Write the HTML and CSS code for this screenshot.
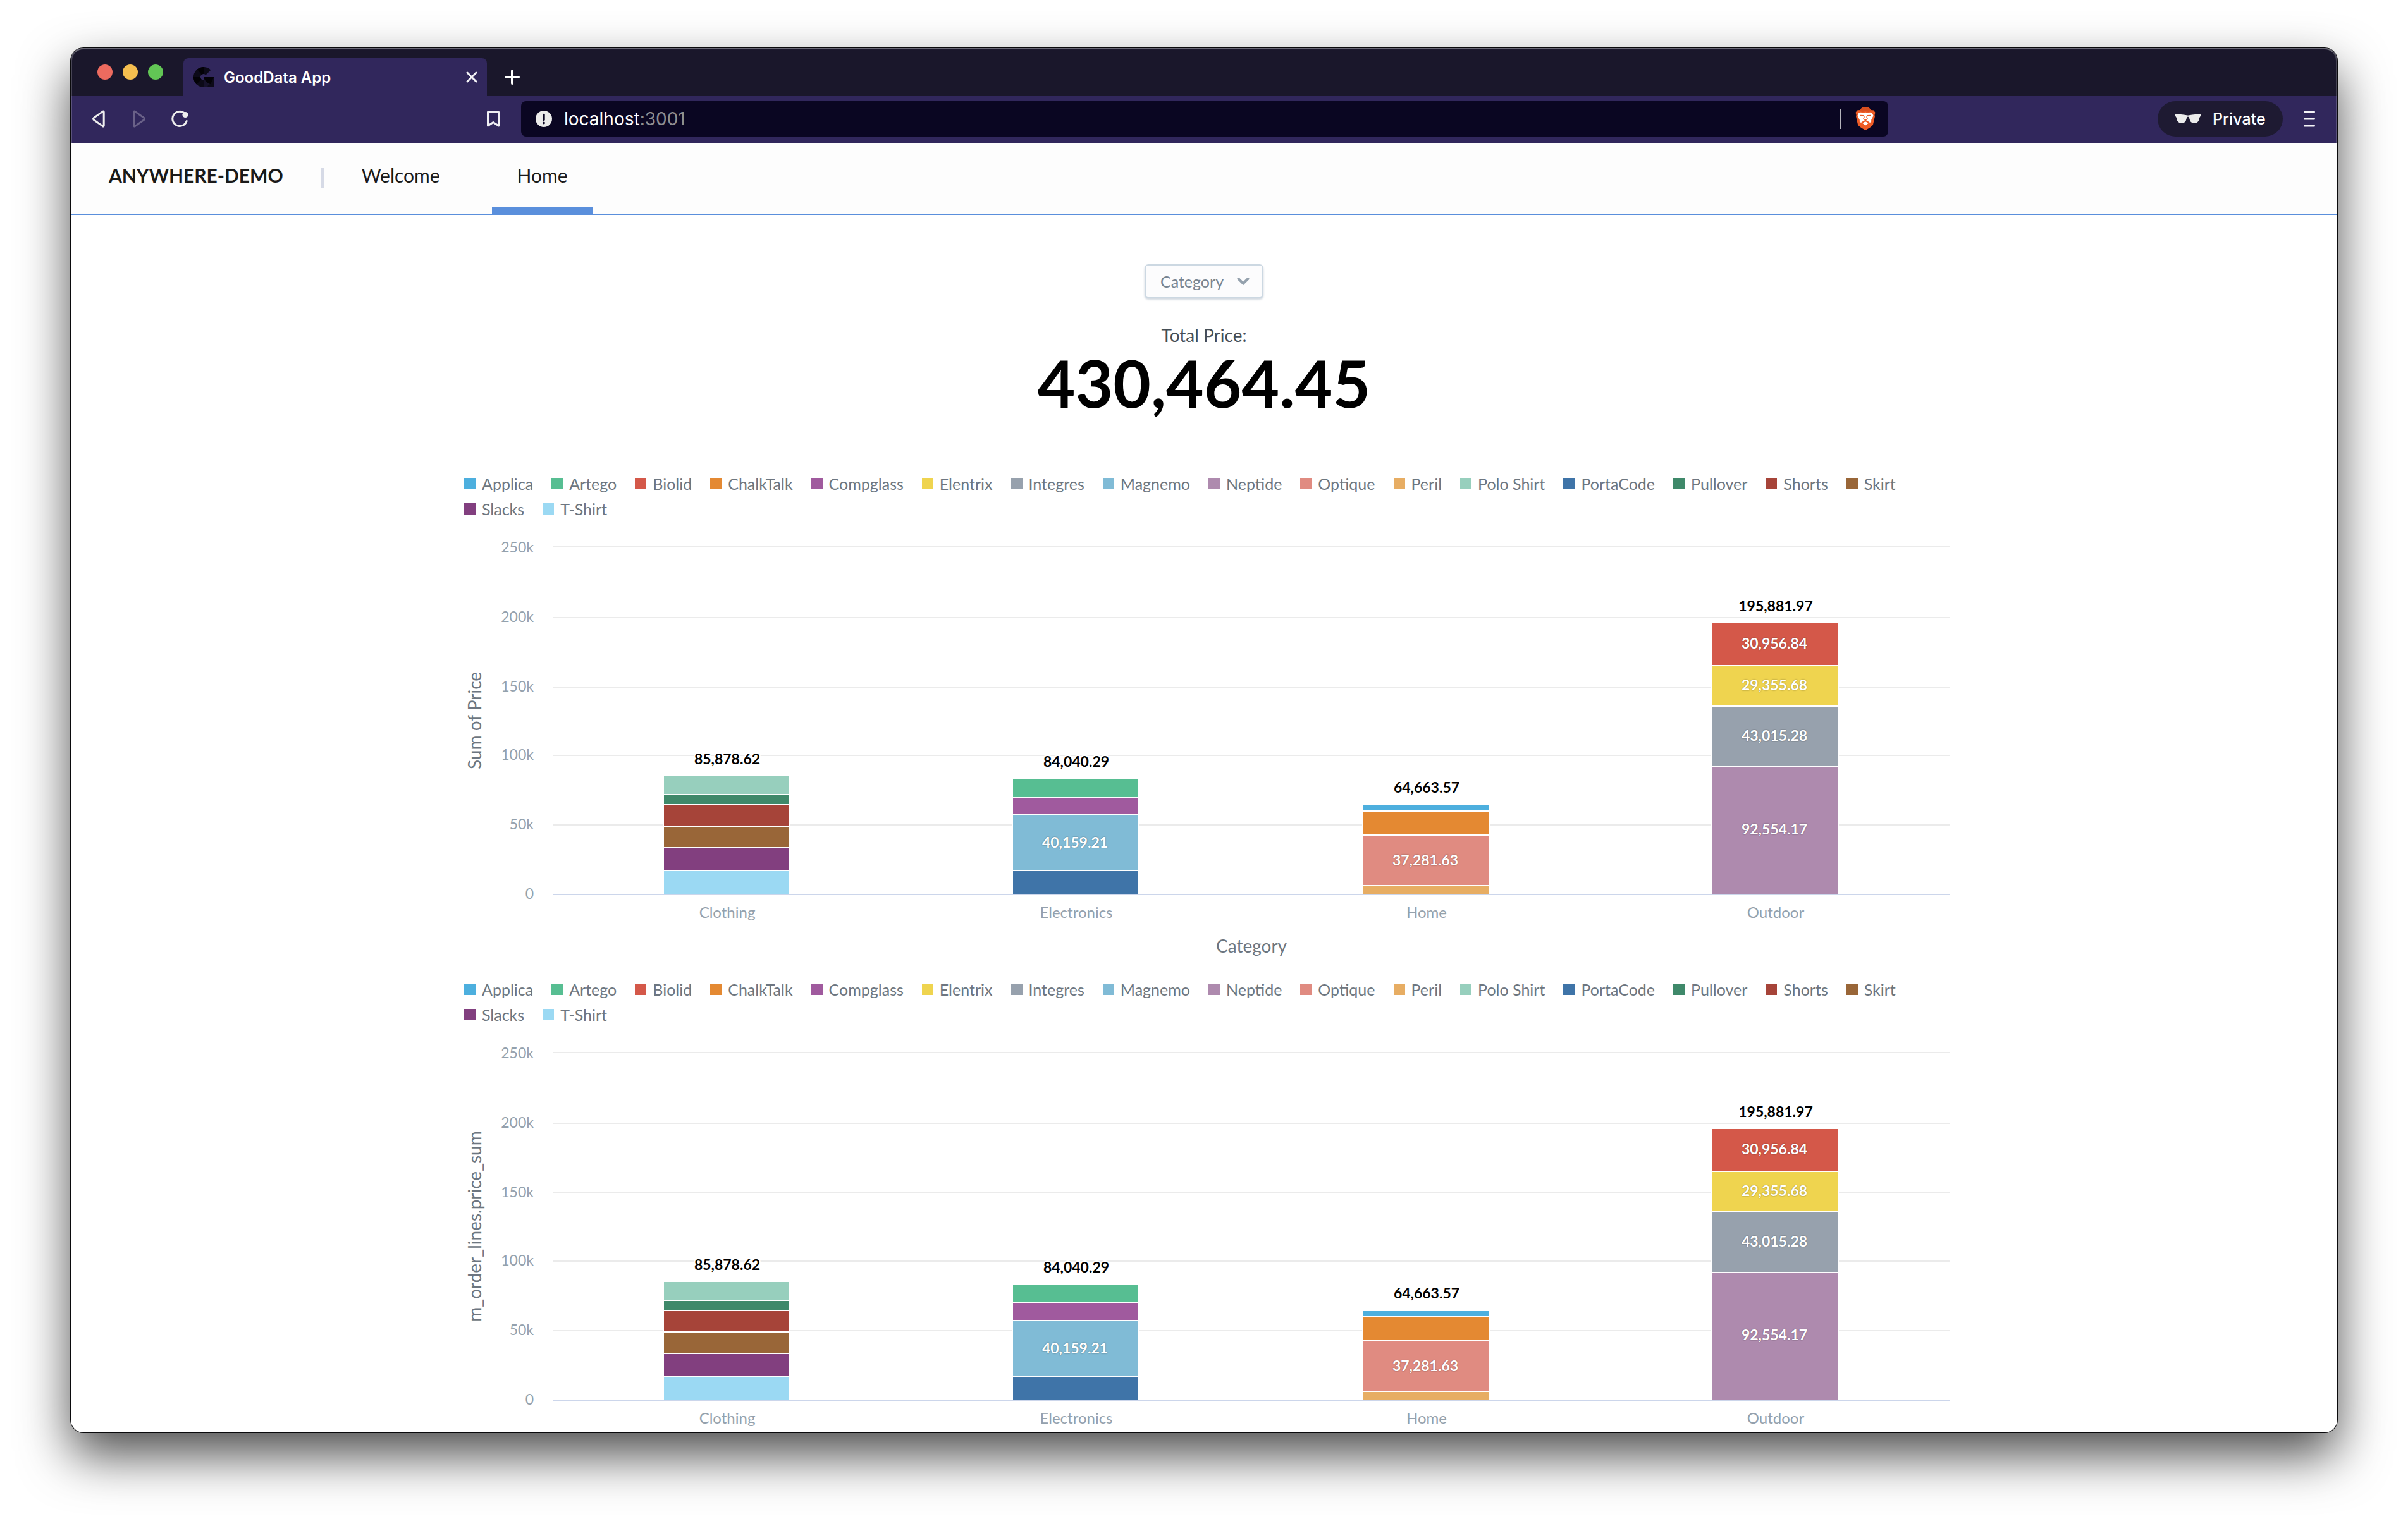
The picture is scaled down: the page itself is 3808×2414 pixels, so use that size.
FILE: index.html
```html
<!DOCTYPE html>
<html lang="en">
<head>
<meta charset="utf-8">
<title>GoodData App</title>
<link rel="stylesheet" href="styles.css">
</head>
<body>
<div class="window">
  <header class="chrome">
    <div class="tabstrip">
      <div class="lights">
        <button class="light light-close" aria-label="Close window"></button>
        <button class="light light-min" aria-label="Minimise window"></button>
        <button class="light light-max" aria-label="Zoom window"></button>
      </div>
      <div class="tab">
        <svg class="favicon" viewBox="0 0 32 32" width="32" height="32" aria-hidden="true">
          <path fill="#0c0a18" d="M27.3 4.7A16 16 0 1 0 22 30.8Q26 32 32 32V16H16V21A5 5 0 1 1 19.5 12.5Z"/>
          <path fill="#030207" d="M16 0A16 16 0 0 0 6 3.5L12.8 12A5 5 0 0 1 16 11ZM0 16A16 16 0 0 0 4.7 27.3L12.5 19.5A5 5 0 0 1 11 16ZM16 16H32L27 27Q19 25 16 16Z"/>
          <path fill="#16122b" d="M16 21V32L21 31L26 27Q20 25 17 19Z"/>
        </svg>
        <span class="tab-title">GoodData App</span>
        <button class="icon-button tab-close" aria-label="Close tab">
          <svg viewBox="0 0 18 18" width="18" height="18"><path d="M2 2L16 16M16 2L2 16" stroke="#f4f3f7" stroke-width="3" stroke-linecap="round"/></svg>
        </button>
      </div>
      <button class="icon-button new-tab" aria-label="New tab">
        <svg viewBox="0 0 24 24" width="24" height="24"><path d="M12 2V22M2 12H22" stroke="#fff" stroke-width="4" stroke-linecap="round"/></svg>
      </button>
    </div>
    <div class="toolbar">
      <div class="toolbar-left">
        <button class="icon-button" aria-label="Back">
          <svg viewBox="0 0 20 28" width="20" height="28" fill="none"><path d="M16.4 2.4Q18.2 1.4 18.2 3.4V24.6Q18.2 26.6 16.4 25.6L2.4 15.6Q.6 14 2.4 12.4Z" stroke="#eee" stroke-width="3"/></svg>
        </button>
        <button class="icon-button" aria-label="Forward" disabled>
          <svg viewBox="0 0 20 28" width="20" height="28" fill="none"><path d="M3.6 2.4Q1.8 1.4 1.8 3.4V24.6Q1.8 26.6 3.6 25.6L17.6 15.6Q19.4 14 17.6 12.4Z" stroke="#6a6188" stroke-width="3"/></svg>
        </button>
        <button class="icon-button" aria-label="Reload">
          <svg viewBox="0 0 28 28" width="28" height="28" fill="none"><path d="M21 4.5A11.5 11.5 0 1 0 25.2 17.5" stroke="#eee" stroke-width="3" stroke-linecap="round"/><circle cx="23" cy="7.5" r="4.6" fill="#eee"/></svg>
        </button>
        <button class="icon-button bookmark" aria-label="Bookmark">
          <svg viewBox="0 0 20 26" width="20" height="26" fill="none"><path d="M1.5 2.5Q1.5 1.5 2.5 1.5H17.5Q18.5 1.5 18.5 2.5V24L10 18.5L1.5 24Z" stroke="#f0eff4" stroke-width="3" stroke-linejoin="round"/></svg>
        </button>
      </div>
      <div class="address">
        <svg viewBox="0 0 26 26" width="26" height="26" aria-hidden="true"><circle cx="13" cy="13" r="13" fill="#ebebeb"/><path d="M13 6.5V14.5" stroke="#0a0622" stroke-width="3.4" stroke-linecap="round"/><circle cx="13" cy="19.5" r="1.9" fill="#0a0622"/></svg>
        <div class="url" role="textbox" aria-label="Address">localhost<span class="port">:3001</span></div>
        <span class="address-rule"></span>
        <button class="shield" aria-label="Brave Shields">
          <svg viewBox="0 0 32 36" width="32" height="36">
            <path fill="#ee5c26" d="M7 4L11 0H21L25 4L29 4.5L31.5 8L30.5 12L31 14L28 27Q27 30 16 36Q5 30 4 27L1 14L1.5 12L.5 8L3 4.5Z"/>
            <path fill="#d94f1f" d="M7 4L11 0H21L25 4L27 5L21 7L16 6L11 7L5 5Z"/>
            <path fill="#fff" d="M5.5 8.5L9 7.8L12 8.8L16 7.8L20 8.8L23 7.8L26.5 8.5L28.5 13L25 20Q26.5 22.5 23 24L18.5 20.8L16 20L13.5 20.8L9 24Q5.5 22.5 7 20L3.5 13ZM16 22L20.5 25L16 28.5L11.5 25Z"/>
            <path fill="none" stroke="#ee5c26" stroke-width="1.5" d="M7.5 12.5L13 12.8L14 15L13 18L16 20L19 18L18 15L19 12.8L24.5 12.5M16 20V22.5"/>
          </svg>
        </button>
      </div>
      <div class="toolbar-right">
        <button class="private">
          <svg viewBox="0 0 40 14" width="40" height="14" aria-hidden="true"><path fill="#ececec" d="M0 0Q10-.5 18 1.2Q20 1.8 22 1.2Q30-.5 40 0V2.5Q38.5 3.5 37.8 7Q36.5 14 30 14Q23.5 14 22.3 6.5Q21.5 3.5 20 3.5Q18.5 3.5 17.7 6.5Q16.5 14 10 14Q3.5 14 2.2 7Q1.5 3.5 0 2.5Z"/></svg>
          <span>Private</span>
        </button>
        <button class="icon-button menu" aria-label="Menu">
          <svg viewBox="0 0 18 26" width="18" height="26"><path d="M1.5 2H16.5M1.5 13H16.5M1.5 24H16.5" stroke="#f4f3f7" stroke-width="3" stroke-linecap="round"/></svg>
        </button>
      </div>
    </div>
  </header>

  <nav class="site-nav">
    <a class="brand" href="#">ANYWHERE-DEMO</a>
    <span class="nav-rule"></span>
    <a class="nav-link" href="#">Welcome</a>
    <a class="nav-link active" href="#">Home</a>
  </nav>

  <main class="dashboard">
    <div class="filter">
      <select class="filter-select" aria-label="Category"><option>Category</option></select>
      <svg class="filter-arrow" viewBox="0 0 20 14" width="20" height="14" fill="none" aria-hidden="true"><path d="M2.5 3L10 10.5L17.5 3" stroke="#94a1ad" stroke-width="4" stroke-linecap="round"/></svg>
    </div>
    <p class="kpi-label">Total Price:</p>
    <p class="kpi-value">430,464.45</p>

    <section class="charts">
      <figure class="chart">
        <ul class="legend">
          <li class="c-applica">Applica</li><li class="c-artego">Artego</li><li class="c-biolid">Biolid</li><li class="c-chalktalk">ChalkTalk</li><li class="c-compglass">Compglass</li><li class="c-elentrix">Elentrix</li><li class="c-integres">Integres</li><li class="c-magnemo">Magnemo</li><li class="c-neptide">Neptide</li><li class="c-optique">Optique</li><li class="c-peril">Peril</li><li class="c-polo">Polo Shirt</li><li class="c-portacode">PortaCode</li><li class="c-pullover">Pullover</li><li class="c-shorts">Shorts</li><li class="c-skirt">Skirt</li><li class="c-slacks">Slacks</li><li class="c-tshirt">T-Shirt</li>
        </ul>
        <svg class="plot" viewBox="0 0 2360 720" role="img" aria-label="Sum of Price by Category">
          <path class="grid" d="M150 38H2360M150 150H2360M150 260H2360M150 368H2360M150 478H2360"/>
          <g class="y-ticks">
            <text x="120" y="47">250k</text><text x="120" y="157">200k</text><text x="120" y="267">150k</text><text x="120" y="375">100k</text><text x="120" y="485">50k</text><text x="120" y="595">0</text>
          </g>
          <g class="bars">
            <rect class="c-polo" x="326" y="401" width="198" height="28"/><rect class="c-pullover" x="326" y="431" width="198" height="14"/><rect class="c-shorts" x="326" y="447" width="198" height="32"/><rect class="c-skirt" x="326" y="481" width="198" height="32"/><rect class="c-slacks" x="326" y="515" width="198" height="34"/><rect class="c-tshirt" x="326" y="551" width="198" height="36"/>
            <rect class="c-artego" x="878" y="405" width="198" height="28"/><rect class="c-compglass" x="878" y="435" width="198" height="26"/><rect class="c-magnemo" x="878" y="463" width="198" height="86"/><rect class="c-portacode" x="878" y="551" width="198" height="36"/>
            <rect class="c-applica" x="1432" y="447" width="198" height="8"/><rect class="c-chalktalk" x="1432" y="457" width="198" height="36"/><rect class="c-optique" x="1432" y="495" width="198" height="78"/><rect class="c-peril" x="1432" y="575" width="198" height="12"/>
            <rect class="c-biolid" x="1984" y="159" width="198" height="66"/><rect class="c-elentrix" x="1984" y="227" width="198" height="62"/><rect class="c-integres" x="1984" y="291" width="198" height="94"/><rect class="c-neptide" x="1984" y="387" width="198" height="200"/>
          </g>
          <path class="axis" d="M150 588H2360"/>
          <g class="values">
            <text x="976" y="514">40,159.21</text><text x="1530" y="542">37,281.63</text><text x="2082" y="199">30,956.84</text><text x="2082" y="265">29,355.68</text><text x="2082" y="345">43,015.28</text><text x="2082" y="493">92,554.17</text>
          </g>
          <g class="totals">
            <text x="426" y="382">85,878.62</text><text x="978" y="386">84,040.29</text><text x="1532" y="427">64,663.57</text><text x="2084" y="140">195,881.97</text>
          </g>
          <g class="x-ticks">
            <text x="426" y="625">Clothing</text><text x="978" y="625">Electronics</text><text x="1532" y="625">Home</text><text x="2084" y="625">Outdoor</text>
          </g>
          <text class="axis-title" x="1255" y="680">Category</text>
          <text class="axis-title" transform="translate(37 313) rotate(-90)">Sum of Price</text>
        </svg>
      </figure>

      <figure class="chart">
        <ul class="legend">
          <li class="c-applica">Applica</li><li class="c-artego">Artego</li><li class="c-biolid">Biolid</li><li class="c-chalktalk">ChalkTalk</li><li class="c-compglass">Compglass</li><li class="c-elentrix">Elentrix</li><li class="c-integres">Integres</li><li class="c-magnemo">Magnemo</li><li class="c-neptide">Neptide</li><li class="c-optique">Optique</li><li class="c-peril">Peril</li><li class="c-polo">Polo Shirt</li><li class="c-portacode">PortaCode</li><li class="c-pullover">Pullover</li><li class="c-shorts">Shorts</li><li class="c-skirt">Skirt</li><li class="c-slacks">Slacks</li><li class="c-tshirt">T-Shirt</li>
        </ul>
        <svg class="plot" viewBox="0 0 2360 720" role="img" aria-label="m_order_lines.price_sum by Category">
          <path class="grid" d="M150 38H2360M150 150H2360M150 260H2360M150 368H2360M150 478H2360"/>
          <g class="y-ticks">
            <text x="120" y="47">250k</text><text x="120" y="157">200k</text><text x="120" y="267">150k</text><text x="120" y="375">100k</text><text x="120" y="485">50k</text><text x="120" y="595">0</text>
          </g>
          <g class="bars">
            <rect class="c-polo" x="326" y="401" width="198" height="28"/><rect class="c-pullover" x="326" y="431" width="198" height="14"/><rect class="c-shorts" x="326" y="447" width="198" height="32"/><rect class="c-skirt" x="326" y="481" width="198" height="32"/><rect class="c-slacks" x="326" y="515" width="198" height="34"/><rect class="c-tshirt" x="326" y="551" width="198" height="36"/>
            <rect class="c-artego" x="878" y="405" width="198" height="28"/><rect class="c-compglass" x="878" y="435" width="198" height="26"/><rect class="c-magnemo" x="878" y="463" width="198" height="86"/><rect class="c-portacode" x="878" y="551" width="198" height="36"/>
            <rect class="c-applica" x="1432" y="447" width="198" height="8"/><rect class="c-chalktalk" x="1432" y="457" width="198" height="36"/><rect class="c-optique" x="1432" y="495" width="198" height="78"/><rect class="c-peril" x="1432" y="575" width="198" height="12"/>
            <rect class="c-biolid" x="1984" y="159" width="198" height="66"/><rect class="c-elentrix" x="1984" y="227" width="198" height="62"/><rect class="c-integres" x="1984" y="291" width="198" height="94"/><rect class="c-neptide" x="1984" y="387" width="198" height="200"/>
          </g>
          <path class="axis" d="M150 588H2360"/>
          <g class="values">
            <text x="976" y="514">40,159.21</text><text x="1530" y="542">37,281.63</text><text x="2082" y="199">30,956.84</text><text x="2082" y="265">29,355.68</text><text x="2082" y="345">43,015.28</text><text x="2082" y="493">92,554.17</text>
          </g>
          <g class="totals">
            <text x="426" y="382">85,878.62</text><text x="978" y="386">84,040.29</text><text x="1532" y="427">64,663.57</text><text x="2084" y="140">195,881.97</text>
          </g>
          <g class="x-ticks">
            <text x="426" y="625">Clothing</text><text x="978" y="625">Electronics</text><text x="1532" y="625">Home</text><text x="2084" y="625">Outdoor</text>
          </g>
          <text class="axis-title" transform="translate(37 313) rotate(-90)">m_order_lines.price_sum</text>
        </svg>
      </figure>
    </section>
  </main>
</div>
</body>
</html>
```
FILE: styles.css
```css
*, *::before, *::after { box-sizing: border-box; }
html { background: #fff; }
body {
  display: flex;
  height: 100vh;
  margin: 0;
  padding: 76px 112px 148px;
  overflow: hidden;
  font-family: Lato, "Open Sans", sans-serif;
}
p, ul, figure { margin: 0; padding: 0; }
button { padding: 0; border: 0; background: none; color: inherit; font: inherit; }
a { color: inherit; text-decoration: none; }
svg { display: block; flex: none; }

.window {
  display: flex;
  flex-direction: column;
  flex: 1;
  min-width: 0;
  overflow: hidden;
  border-radius: 20px;
  background: #fff;
  box-shadow: 0 0 0 1px #0a0a0c, 0 36px 80px rgba(0, 0, 0, .7);
}

/* Browser chrome */
.chrome {
  position: relative;
  flex: none;
  background: #1a172b;
  color: #fff;
  font-family: Inter, "Liberation Sans", sans-serif;
}
.chrome::after {
  content: "";
  position: absolute;
  inset: 0;
  border: 2px solid rgba(255, 255, 255, .2);
  border-top-color: rgba(255, 255, 255, .35);
  border-bottom: 0;
  border-radius: 20px 20px 0 0;
  pointer-events: none;
}
.tabstrip { display: flex; align-items: flex-end; height: 76px; padding-left: 42px; }
.lights { display: flex; align-items: center; align-self: stretch; gap: 16px; margin-right: 32px; }
.light { width: 24px; height: 24px; border-radius: 50%; }
.light-close { background: #ed6b5f; }
.light-min { background: #f5be4f; }
.light-max { background: #62c655; }
.tab {
  display: flex;
  align-items: center;
  gap: 16px;
  width: 480px;
  height: 60px;
  padding: 0 14px 0 16px;
  border-radius: 8px 8px 0 0;
  background: #31275c;
}
.tab-title { flex: 1; font-size: 24px; font-weight: 600; }
.icon-button { display: flex; align-items: center; justify-content: center; width: 64px; height: 56px; }
.tab-close { width: 20px; }
.new-tab { width: 40px; height: 60px; margin-left: 20px; }
.toolbar { display: flex; height: 74px; padding-top: 8px; background: #31275c; }
.toolbar-left { display: flex; width: 712px; padding: 0 12px; }
.bookmark { margin-left: auto; }
.address {
  display: flex;
  align-items: center;
  flex: 1;
  height: 56px;
  padding: 0 20px 0 23px;
  border-radius: 8px;
  background: #0a0622;
}
.url { flex: 1; margin-left: 19px; font-size: 28px; }
.port { color: #8f8f92; }
.address-rule { width: 2px; height: 32px; margin-right: 22px; background: #b5b4bb; }
.toolbar-right { display: flex; justify-content: flex-end; width: 710px; padding-right: 14px; }
.private {
  display: flex;
  align-items: center;
  gap: 19px;
  width: 198px;
  height: 56px;
  padding-left: 28px;
  border-radius: 28px;
  background: #1e1a32;
  font-size: 25px;
  font-weight: 500;
}
.menu { width: 60px; margin-left: 12px; }

/* Site navigation */
.site-nav {
  display: flex;
  flex: none;
  align-items: center;
  height: 114px;
  padding-left: 60px;
  border-bottom: 2px solid #5a8fdc;
  background: #fdfdfd;
  color: #1a1a1a;
  font-size: 30px;
}
.brand, .nav-link { display: flex; align-items: center; height: 112px; border-bottom: 10px solid transparent; }
.brand { font-weight: 700; }
.nav-rule { width: 4px; height: 32px; margin: 0 20px 0 60px; background: #d6dae6; }
.nav-link { margin-right: 42px; padding: 0 40px; }
.nav-link.active { border-bottom-color: #5a8fdc; }

/* Dashboard */
.dashboard { flex: 1; min-height: 0; padding-top: 78px; overflow: hidden; text-align: center; }
.filter { display: inline-grid; align-items: center; vertical-align: top; }
.filter-select {
  grid-area: 1 / 1;
  width: 188px;
  height: 54px;
  padding: 0 0 0 23px;
  border: 2px solid #ccd8e2;
  border-radius: 6px;
  background: #fcfcfd;
  box-shadow: 0 2px 3px rgba(20, 56, 93, .2);
  color: #778491;
  font: 25px Lato, "Open Sans", sans-serif;
  appearance: none;
}
.filter-arrow { grid-area: 1 / 1; justify-self: end; margin-right: 22px; pointer-events: none; }
.kpi-label { margin-top: 38px; color: #464e56; font-size: 28px; line-height: 40px; }
.kpi-value { color: #000; font-size: 103px; font-weight: 700; line-height: 110px; }
.charts { max-width: 2360px; margin: 85px auto 0; }
.legend {
  display: flex;
  flex-wrap: wrap;
  column-gap: 29px;
  padding: 0 10px 2px;
  list-style: none;
  color: #6d7680;
  font-size: 25px;
  line-height: 40px;
}
.legend li { display: flex; align-items: center; gap: 10px; }
.legend li::before { content: ""; width: 18px; height: 18px; background: var(--series); }
.chart + .chart { margin-top: -2px; }
.plot { width: 100%; height: auto; font-family: Lato, "Open Sans", sans-serif; }
.grid { stroke: #ebebeb; stroke-width: 2px; }
.axis { stroke: #ccd6eb; stroke-width: 2px; }
.bars rect { fill: var(--series); stroke: #fff; stroke-width: 4px; paint-order: stroke; }
.y-ticks { fill: #94a1ad; font-size: 23px; text-anchor: end; }
.x-ticks { fill: #94a1ad; font-size: 24px; text-anchor: middle; }
.values, .totals { font-size: 23px; font-weight: 700; text-anchor: middle; }
.values { fill: #fff; text-shadow: 0 0 2px rgba(0, 0, 0, .45); }
.totals { fill: #000; stroke: #fff; stroke-width: 4px; paint-order: stroke; }
.axis-title { fill: #6d7680; font-size: 28px; text-anchor: middle; }

/* Series colours */
.c-applica { --series: #4dafde; }
.c-artego { --series: #57be92; }
.c-biolid { --series: #d45849; }
.c-chalktalk { --series: #e48932; }
.c-compglass { --series: #a05a9e; }
.c-elentrix { --series: #efd44f; }
.c-integres { --series: #97a1ad; }
.c-magnemo { --series: #80bbd6; }
.c-neptide { --series: #ae8aae; }
.c-optique { --series: #e08b81; }
.c-peril { --series: #e7ad63; }
.c-polo { --series: #97cfbd; }
.c-portacode { --series: #3f74a8; }
.c-pullover { --series: #3f896a; }
.c-shorts { --series: #a64439; }
.c-skirt { --series: #996638; }
.c-slacks { --series: #823f7f; }
.c-tshirt { --series: #9bd9f3; }
```
